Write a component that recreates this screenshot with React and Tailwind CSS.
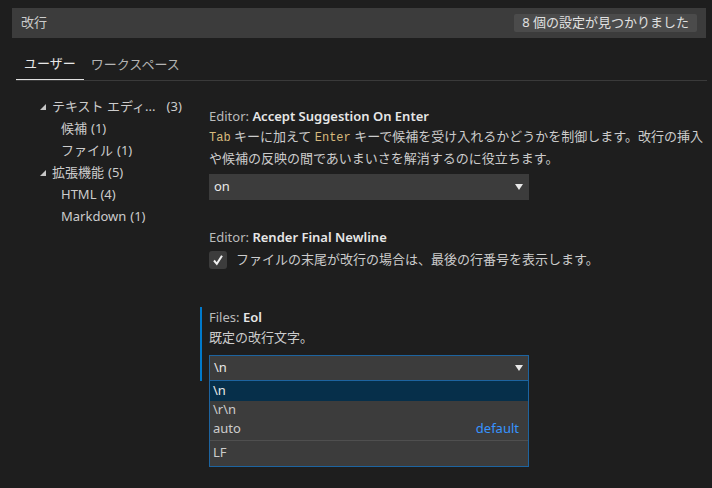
import React from "react";

const font = { fontFamily: '"Noto Sans", "Noto Sans CJK JP", sans-serif' };

const Twistie = () => (
  <svg width="6" height="6" viewBox="0 0 6 6" className="shrink-0">
    <polygon points="6,0 6,6 0,6" fill="#c5c5c5" />
  </svg>
);

const Arrow = () => (
  <svg width="8" height="6" viewBox="0 0 8 6">
    <polygon points="0,0 8,0 4,6" fill="#e8e8e8" />
  </svg>
);

const tree = [
  { label: "テキスト エディ...", count: "(3)", top: true, gap: "ml-[11px]" },
  { label: "候補", count: "(1)" },
  { label: "ファイル", count: "(1)" },
  { label: "拡張機能", count: "(5)", top: true },
  { label: "HTML", count: "(4)" },
  { label: "Markdown", count: "(1)" },
];

const Code = ({ children }) => (
  <span className="text-[12px] text-[#d7ba7d]" style={{ fontFamily: '"Liberation Mono", monospace' }}>
    {children}
  </span>
);

export default function App() {
  return (
    <div className="w-[712px] h-[488px] bg-[#1e1e1e] overflow-hidden text-[13px] text-[#cccccc]" style={font}>
      {/* Search */}
      <div className="mt-[8px] ml-[12px] mr-[6px] h-[30px] bg-[#3c3c3c] flex items-center justify-between pl-[9px] pr-[9px]">
        <span className="text-[#cccccc]">改行</span>
        <span className="h-[18px] px-[8px] bg-[#4b4b4b] rounded-[2px] flex items-center text-[#e0e0e0]">
          8 個の設定が見つかりました
        </span>
      </div>

      {/* Tabs */}
      <div className="mt-[11px] ml-[16px] mr-[5px] flex border-b border-[#3a3a3a]">
        <div className="h-[31px] px-[8px] flex items-center -mb-px border-b border-[#e0e0e0] text-[13px] text-[#e7e7e7]">ユーザー</div>
        <div className="h-[31px] px-[7px] flex items-center text-[13px] text-[#b4b4b4]">ワークスペース</div>
      </div>

      <div className="flex">
        {/* Tree */}
        <div className="w-[200px] shrink-0 pt-[15px]">
          {tree.map((t, i) => (
            <div key={i} className={`h-[22px] flex items-center ${t.top ? "pl-[40px]" : "pl-[61px]"}`}>
              {t.top && <span className="mr-[6px] flex"><Twistie /></span>}
              <span className="whitespace-nowrap">{t.label}</span>
              <span className={t.gap || "ml-[4px]"}>{t.count}</span>
            </div>
          ))}
        </div>

        {/* Settings */}
        <div className="flex-1 pt-[25px]">
          <div className="border-l-2 border-transparent pl-[7px]">
            <div className="leading-[20px] text-[#bbbbbb]">
              Editor: <span className="font-semibold text-[#e7e7e7]">Accept Suggestion On Enter</span>
            </div>
            <div className="leading-[20px] whitespace-nowrap">
              <Code>Tab</Code> キーに加えて <Code>Enter</Code> キーで候補を受け入れるかどうかを制御します。改行の挿入
              <br />
              や候補の反映の間であいまいさを解消するのに役立ちます。
            </div>
            <div className="mt-[6px] w-[320px] h-[26px] bg-[#3c3c3c] flex items-center justify-between pl-[5px] pr-[6px] text-[#e8e8e8]">
              <span>on</span>
              <Arrow />
            </div>
          </div>

          <div className="mt-[27px] border-l-2 border-transparent pl-[7px]">
            <div className="leading-[20px] text-[#bbbbbb]">
              Editor: <span className="font-semibold text-[#e7e7e7]">Render Final Newline</span>
            </div>
            <div className="mt-[3px] flex items-center">
              <div className="w-[18px] h-[18px] bg-[#3c3c3c] rounded-[3px] flex items-center justify-center">
                <svg width="12" height="12" viewBox="0 0 12 12">
                  <path d="M2 6.5 L4.8 9.8 L10 1.8" stroke="#f0f0f0" strokeWidth="2" fill="none" />
                </svg>
              </div>
              <span className="ml-[9px]">ファイルの末尾が改行の場合は、最後の行番号を表示します。</span>
            </div>
          </div>

          <div className="mt-[37px] border-l-2 border-[#007acc] pl-[7px] relative">
            <div className="leading-[20px] text-[#bbbbbb]">
              Files: <span className="font-semibold text-[#e7e7e7]">Eol</span>
            </div>
            <div className="leading-[20px]">既定の改行文字。</div>
            <div className="mt-[8px] w-[320px] h-[26px] bg-[#3c3c3c] border border-[#1d64a0] flex items-center justify-between pl-[4px] pr-[5px] text-[#e8e8e8]">
              <span>\n</span>
              <Arrow />
            </div>

            {/* Dropdown list */}
            <div className="absolute left-[7px] top-full w-[320px] h-[86px] bg-[#3c3c3c] border border-t-0 border-[#1d64a0] flex flex-col z-10">
              <div className="h-[20px] bg-[#062f4a] flex items-center pl-[3px] text-[#e8e8e8]">\n</div>
              <div className="h-[19px] flex items-center pl-[3px]">\r\n</div>
              <div className="h-[18px] flex items-center justify-between pl-[3px] pr-[9px]">
                <span>auto</span>
                <span className="text-[#3794ff]">default</span>
              </div>
              <div className="mt-[2px] border-t border-[#4f4f4f] flex-1 flex items-center pl-[3px]">LF</div>
            </div>
          </div>
        </div>
      </div>
    </div>
  );
}
